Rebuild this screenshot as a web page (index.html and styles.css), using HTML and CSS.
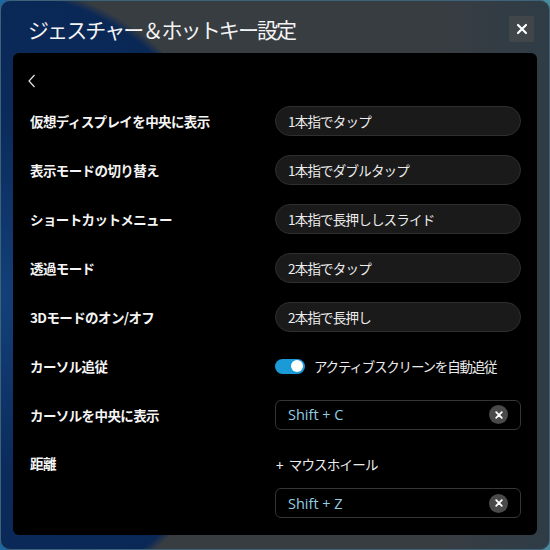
FILE: index.html
```html
<!DOCTYPE html>
<html lang="ja">
<head>
<meta charset="utf-8">
<link rel="stylesheet" href="styles.css">
</head>
<body>
<div class="window">
  <div class="titlebar">
    <div class="title">ジェスチャー＆ホットキー設定</div>
    <div class="close">
      <svg width="12" height="12" viewBox="0 0 12 12"><path d="M2 2 L10 10 M10 2 L2 10" stroke="#fff" stroke-width="2.2" stroke-linecap="round"/></svg>
    </div>
  </div>
  <div class="panel">
    <div class="back">
      <svg width="10" height="16" viewBox="0 0 10 16"><path d="M7.5 2 L2 8 L7.5 14" fill="none" stroke="#e6e6e6" stroke-width="1.2"/></svg>
    </div>
    <div class="rows">
      <div class="row"><div class="label">仮想ディスプレイを中央に表示</div><div class="ctrl"><div class="pill">1本指でタップ</div></div></div>
      <div class="row"><div class="label">表示モードの切り替え</div><div class="ctrl"><div class="pill">1本指でダブルタップ</div></div></div>
      <div class="row"><div class="label">ショートカットメニュー</div><div class="ctrl"><div class="pill">1本指で長押ししスライド</div></div></div>
      <div class="row"><div class="label">透過モード</div><div class="ctrl"><div class="pill">2本指でタップ</div></div></div>
      <div class="row"><div class="label">3Dモードのオン/オフ</div><div class="ctrl"><div class="pill">2本指で長押し</div></div></div>
      <div class="row"><div class="label">カーソル追従</div><div class="ctrl toggle-line"><span class="toggle"><span class="knob"></span></span><span class="toggle-text">アクティブスクリーンを自動追従</span></div></div>
      <div class="row"><div class="label">カーソルを中央に表示</div><div class="ctrl"><div class="key"><span class="key-text">Shift + C</span><span class="clear"><svg width="8" height="8" viewBox="0 0 8 8"><path d="M1.2 1.2 L6.8 6.8 M6.8 1.2 L1.2 6.8" stroke="#fff" stroke-width="1.8" stroke-linecap="round"/></svg></span></div></div></div>
      <div class="row row-last">
        <div class="label label-top">距離</div>
        <div class="ctrl-stack">
          <div class="wheel"><span class="plus">+</span>マウスホイール</div>
          <div class="key"><span class="key-text">Shift + Z</span><span class="clear"><svg width="8" height="8" viewBox="0 0 8 8"><path d="M1.2 1.2 L6.8 6.8 M6.8 1.2 L1.2 6.8" stroke="#fff" stroke-width="1.8" stroke-linecap="round"/></svg></span></div>
        </div>
      </div>
    </div>
  </div>
</div>
</body>
</html>
```

FILE: styles.css
```css
html, body {
  margin: 0;
  padding: 0;
}
body {
  width: 550px;
  height: 550px;
  background: linear-gradient(90deg, #1d67a4 0%, #2e6f8c 60%, #4a8ca0 100%);
  font-family: "Noto Sans CJK JP", "Noto Sans", sans-serif;
  overflow: hidden;
}
.window {
  width: 550px;
  height: 550px;
  box-sizing: border-box;
  border-radius: 10px;
  border: 1px solid #3d6378;
  background-color: #383d42;
  background-image:
    radial-gradient(ellipse 275px 315px at -10px 296px, #14407a 0%, #0b2b5c 55%, #0a2856 97%, rgba(10,40,86,0) 100%),
    linear-gradient(90deg, #383d42 0%, #383d42 80%, #2f3c46 100%);
  display: flex;
  flex-direction: column;
  overflow: hidden;
}
.titlebar {
  height: 52px;
  display: flex;
  align-items: center;
  justify-content: space-between;
  padding: 0 15px 0 27px;
  flex: none;
}
.title {
  color: #f4f4f4;
  font-size: 21px;
  letter-spacing: -1.9px;
  line-height: 1;
  margin-top: 4px;
}
.close {
  width: 25px;
  height: 26px;
  background: #41464b;
  display: flex;
  align-items: center;
  justify-content: center;
  margin-top: 3px;
}
.panel {
  flex: 1;
  margin: 0 12px 14px 12px;
  background: #000;
  border-radius: 6px;
  display: flex;
  flex-direction: column;
  padding: 0 16px 0 17px;
}
.back {
  height: 43px;
  display: flex;
  align-items: center;
  margin-left: -3px;
  padding-top: 12px;
  box-sizing: border-box;
}
.rows {
  display: flex;
  flex-direction: column;
}
.row {
  display: grid;
  grid-template-columns: 245px 246px;
  height: 49px;
  align-items: center;
}
.label {
  color: #f5f5f5;
  font-size: 13.5px;
  font-weight: 700;
  letter-spacing: -0.6px;
}
.pill {
  height: 28px;
  border: 1px solid #2f2f2f;
  background: #1a1a1a;
  border-radius: 15px;
  display: flex;
  align-items: center;
  padding-left: 12px;
  color: #ececec;
  font-size: 13.5px;
  letter-spacing: -0.8px;
}
.toggle-line {
  display: flex;
  align-items: center;
}
.toggle {
  width: 30px;
  height: 15px;
  border-radius: 8px;
  background: #1b9ad8;
  display: inline-flex;
  align-items: center;
  justify-content: flex-end;
  padding-right: 2px;
  box-sizing: border-box;
  margin-right: 9px;
  margin-top: 1px;
}
.knob {
  width: 12px;
  height: 12px;
  border-radius: 50%;
  background: #fff;
}
.toggle-text {
  color: #ececec;
  font-size: 13.5px;
  letter-spacing: -1.2px;
}
.key {
  height: 28px;
  border: 1px solid #353535;
  border-radius: 6px;
  background: #000;
  display: flex;
  align-items: center;
  justify-content: space-between;
  padding: 0 12px 0 12px;
}
.key-text {
  color: #93cde2;
  font-family: "Open Sans", "Noto Sans", sans-serif;
  font-size: 14.5px;
}
.clear {
  width: 19px;
  height: 19px;
  border-radius: 50%;
  background: #4a4a4a;
  display: flex;
  align-items: center;
  justify-content: center;
}
.row-last {
  height: auto;
  align-items: start;
}
.label-top {
  line-height: 49px;
}
.ctrl-stack {
  display: flex;
  flex-direction: column;
}
.wheel {
  height: 49px;
  display: flex;
  align-items: center;
  color: #ececec;
  font-size: 13.5px;
  letter-spacing: -0.8px;
  padding-left: 1px;
}
.plus {
  margin-right: 6px;
}
```
